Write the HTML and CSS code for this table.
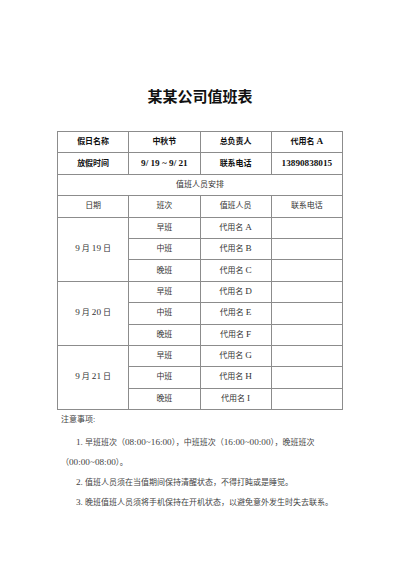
FILE: index.html
```html
<!DOCTYPE html>
<html lang="zh-CN">
<head>
<meta charset="utf-8">
<title>某某公司值班表</title>
<link rel="stylesheet" href="styles.css">
</head>
<body>
<div class="page">
  <h1 class="title">某某公司值班表</h1>
  <table class="duty">
    <colgroup><col class="c"><col class="c"><col class="c"><col class="c"></colgroup>
    <tr class="head">
      <td>假日名称</td><td>中秋节</td><td>总负责人</td><td>代用名 <span class="en">A</span></td>
    </tr>
    <tr class="head">
      <td>放假时间</td><td><span class="en">9/ 19 ~ 9/ 21</span></td><td>联系电话</td><td><span class="en">13890838015</span></td>
    </tr>
    <tr><td colspan="4">值班人员安排</td></tr>
    <tr><td>日期</td><td>班次</td><td>值班人员</td><td>联系电话</td></tr>
    <tr><td rowspan="3"><span class="en">9</span> 月 <span class="en">19</span> 日</td><td>早班</td><td>代用名 <span class="en">A</span></td><td></td></tr>
    <tr><td>中班</td><td>代用名 <span class="en">B</span></td><td></td></tr>
    <tr><td>晚班</td><td>代用名 <span class="en">C</span></td><td></td></tr>
    <tr><td rowspan="3"><span class="en">9</span> 月 <span class="en">20</span> 日</td><td>早班</td><td>代用名 <span class="en">D</span></td><td></td></tr>
    <tr><td>中班</td><td>代用名 <span class="en">E</span></td><td></td></tr>
    <tr><td>晚班</td><td>代用名 <span class="en">F</span></td><td></td></tr>
    <tr><td rowspan="3"><span class="en">9</span> 月 <span class="en">21</span> 日</td><td>早班</td><td>代用名 <span class="en">G</span></td><td></td></tr>
    <tr><td>中班</td><td>代用名 <span class="en">H</span></td><td></td></tr>
    <tr><td>晚班</td><td>代用名 <span class="en">I</span></td><td></td></tr>
  </table>
  <div class="notes">
    <p class="notes-head">注意事项:</p>
    <p class="item first"><span class="en">1.</span> 早班班次<span class="nw">（<span class="en">08:00~16:00</span>），</span>中班班次<span class="nw">（<span class="en">16:00~00:00</span>），</span>晚班班次<span class="nw">（<span class="en">00:00~08:00</span>）。</span></p>
    <p class="item"><span class="en">2.</span> 值班人员须在当值期间保持清醒状态，不得打盹或是睡觉。</p>
    <p class="item"><span class="en">3.</span> 晚班值班人员须将手机保持在开机状态，以避免意外发生时失去联系。</p>
  </div>
</div>
</body>
</html>
```

FILE: styles.css
```css
html, body {
  margin: 0;
  padding: 0;
  background: #ffffff;
}
body {
  font-family: "Liberation Serif", "Noto Sans CJK SC", serif;
  color: #333333;
}
.page {
  width: 286px;
  margin: 0 auto;
  padding-top: 87px;
}
.title {
  margin: 0;
  font-size: 15px;
  line-height: 20px;
  font-weight: bold;
  text-align: center;
  color: #111111;
}
.en {
  font-size: 9.2px;
  line-height: 1;
}
.duty {
  margin-top: 24px;
  width: 286px;
  border-collapse: collapse;
  table-layout: fixed;
  font-size: 8px;
  line-height: 12px;
}
.duty .c {
  width: 25%;
}
.duty tr {
  height: 21.4px;
}
.duty td {
  border: 1px solid #8c8c8c;
  padding: 0;
  text-align: center;
  vertical-align: middle;
  color: #333333;
  white-space: nowrap;
}
.duty tr.head td {
  font-weight: bold;
  color: #111111;
}
.notes {
  padding-left: 4px;
  font-size: 8px;
  line-height: 20px;
  color: #444444;
}
.notes p {
  margin: 0;
}
.item {
  text-indent: 15px;
}
.item.first {
  margin-top: 3px;
}
.nw {
  white-space: nowrap;
}
```
